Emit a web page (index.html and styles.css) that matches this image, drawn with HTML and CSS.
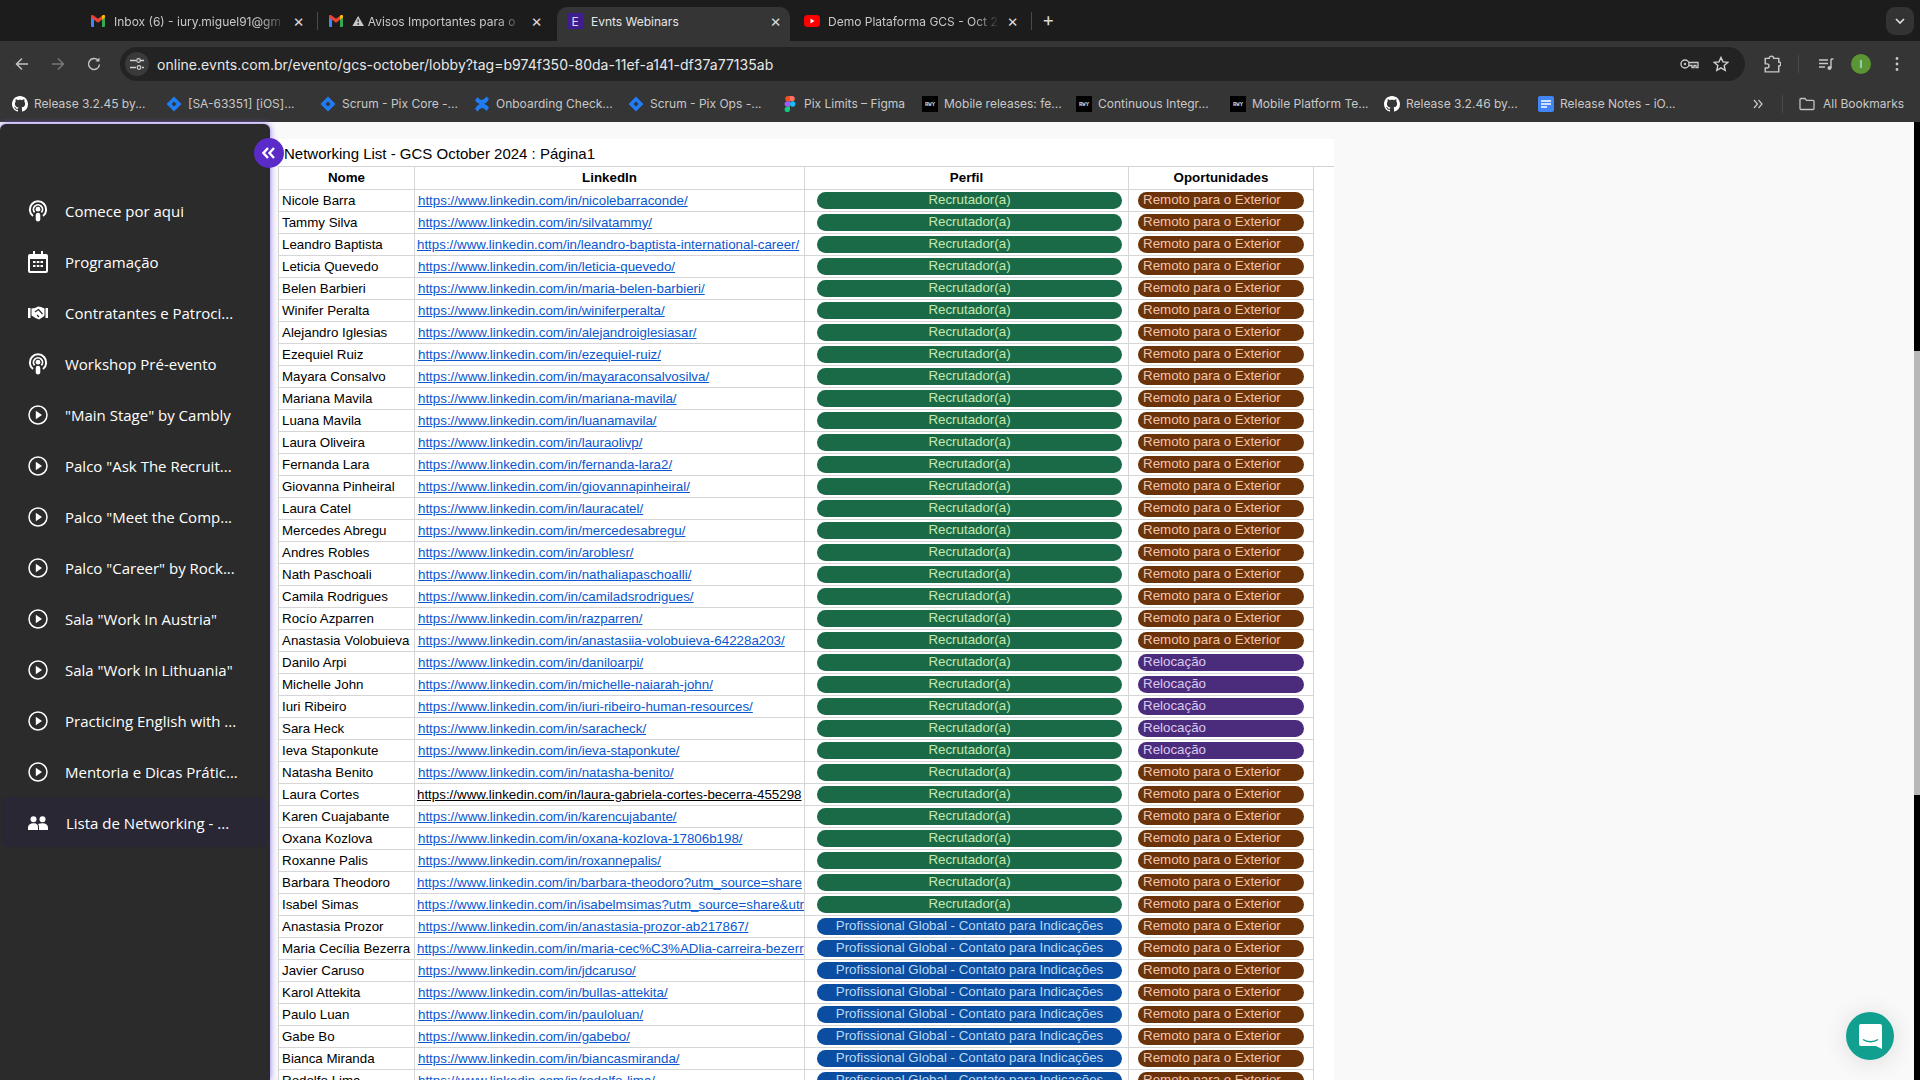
FILE: index.html
```html
<!DOCTYPE html>
<html lang="en">
	<head>
		<meta charset="utf-8" />
		<meta name="viewport" content="width=device-width, initial-scale=1.0" />
		<title>Evnts Webinars</title>
		<link rel="stylesheet" href="styles.css">
	</head>
	<body>
		<svg class="defs" width="0" height="0">
			<symbol id="gmail" viewBox="0 0 16 16">
				<path d="M1 14V4l3 2v8H2a1 1 0 0 1-1-1z" fill="#4285f4" />
				<path d="M15 14V4l-3 2v8h2a1 1 0 0 0 1-1z" fill="#34a853" />
				<path d="M1 4.500V3.200C1 2 2.300 1.500 3.200 2.200L8 5.800l4.800-3.600C13.700 1.500 15 2 15 3.200v1.300l-3 2.200-4 3-4-3z" fill="#ea4335" />
				<path d="M12 6.700l3-2.200V3.200C15 2 13.700 1.500 12.800 2.200L12 2.800z" fill="#fbbc04" />
			</symbol>
			<symbol id="github" viewBox="0 0 16 16">
				<path fill="#fff" d="M8 0C3.580 0 0 3.580 0 8c0 3.540 2.290 6.530 5.470 7.590.4.070.55-.17.55-.38 0-.19-.01-.82-.01-1.490-2.010.37-2.530-.49-2.690-.94-.09-.23-.48-.94-.82-1.130-.28-.15-.68-.52-.01-.53.63-.01 1.080.58 1.230.82.72 1.210 1.870.87 2.330.66.07-.52.28-.87.51-1.070-1.780-.2-3.640-.89-3.640-3.950 0-.87.31-1.590.82-2.150-.08-.2-.36-1.020.08-2.120 0 0 .67-.21 2.200.82.64-.18 1.320-.27 2-.27.68 0 1.360.09 2 .27 1.530-1.040 2.200-.82 2.200-.82.44 1.100.16 1.920.08 2.120.51.56.82 1.270.82 2.150 0 3.070-1.870 3.750-3.650 3.950.29.25.54.73.54 1.480 0 1.070-.01 1.930-.01 2.200 0 .21.15.46.55.38A8.013 8.013 0 0 0 16 8c0-4.420-3.580-8-8-8z" />
			</symbol>
			<symbol id="jira" viewBox="0 0 16 16">
				<path fill="#1f7cf5" d="M8 .5 15.500 8 8 15.500.5 8zM8 5.500 5.500 8 8 10.500 10.500 8z" fill-rule="evenodd" />
			</symbol>
			<symbol id="rwy" viewBox="0 0 16 16">
				<rect width="16" height="16" fill="#000" />
				<text x="8" y="10" text-anchor="middle" font-family="Liberation Mono, monospace" font-size="5.500" font-weight="700" fill="#ddd">RWY</text>
			</symbol>
			<symbol id="podcast" viewBox="0 0 22 24">
				<path d="M5.500 17.500a9 9 0 1 1 11 0" fill="none" stroke="#fff" stroke-width="2.200" />
				<path d="M7.300 13.600a5 5 0 1 1 7.400 0" fill="none" stroke="#fff" stroke-width="2" />
				<circle cx="11" cy="10" r="2.600" fill="#fff" />
				<rect x="8.500" y="14" width="5" height="9.500" rx="2.500" fill="#fff" />
			</symbol>
			<symbol id="play" viewBox="0 0 20 20">
				<circle cx="10" cy="10" r="9" fill="none" stroke="#fff" stroke-width="1.500" />
				<path d="M7.800 5.800 14 10l-6.200 4.200z" fill="#fff" />
			</symbol>
		</svg>

		<header class="tabstrip">
			<div class="tab tab-sep">
				<svg class="fav"><use href="#gmail" /></svg>
				<span class="tab-title">Inbox (6) - iury.miguel91@gm</span>
				<span class="tab-close">×</span>
			</div>
			<div class="tab">
				<svg class="fav"><use href="#gmail" /></svg>
				<span class="tab-title">⚠ Avisos Importantes para o</span>
				<span class="tab-close">×</span>
			</div>
			<div class="tab tab-active">
				<span class="fav fav-evnts">E</span>
				<span class="tab-title">Evnts Webinars</span>
				<span class="tab-close">×</span>
			</div>
			<div class="tab tab-sep">
				<svg class="fav" viewBox="0 0 16 16">
					<rect y="2" width="16" height="12" rx="3.500" fill="#f00" />
					<path d="M6.500 5.500 10.500 8l-4 2.500z" fill="#fff" />
				</svg>
				<span class="tab-title">Demo Plataforma GCS - Oct 2</span>
				<span class="tab-close">×</span>
			</div>
			<span class="tab-new">+</span>
			<span class="tab-list">
				<svg width="10" height="6" viewBox="0 0 10 6"><path d="M1 1l4 4 4-4" fill="none" stroke="#e4e4e4" stroke-width="1.600" /></svg>
			</span>
		</header>

		<nav class="toolbar">
			<svg class="tool tool-back" viewBox="0 0 16 16"><path d="M14 8H2.500M8 2.500 2.500 8 8 13.500" fill="none" stroke="#c4c4c4" stroke-width="1.500" /></svg>
			<svg class="tool tool-fwd" viewBox="0 0 16 16"><path d="M2 8h11.500M8 2.500 13.500 8 8 13.500" fill="none" stroke="#777" stroke-width="1.500" /></svg>
			<svg class="tool tool-reload" viewBox="0 0 16 16"><path d="M13.500 8.500A5.500 5.500 0 1 1 12 4.200" fill="none" stroke="#c4c4c4" stroke-width="1.500" /><path d="M13.500 1.500v4h-4z" fill="#c4c4c4" /></svg>
			<div class="omnibox">
				<span class="site-chip">
					<svg width="14" height="14" viewBox="0 0 14 14"><path d="M0 3.500h6M0 10.500h6M10 3.500h4M12 10.500h2" stroke="#d0d0d0" stroke-width="1.300" /><circle cx="8.500" cy="3.500" r="1.800" fill="none" stroke="#d0d0d0" stroke-width="1.200" /><circle cx="9" cy="10.500" r="1.800" fill="none" stroke="#d0d0d0" stroke-width="1.200" /></svg>
				</span>
				<span class="url">online.evnts.com.br/evento/gcs-october/lobby?tag=b974f350-80da-11ef-a141-df37a77135ab</span>
				<svg class="omni-key" width="19" height="12" viewBox="0 0 19 12"><circle cx="5" cy="6" r="4" fill="none" stroke="#c8c8c8" stroke-width="1.400" /><circle cx="5" cy="6" r="1.200" fill="#c8c8c8" /><path d="M9 4.500h9v5h-2V7.500h-2v2h-2V7.500H9" fill="none" stroke="#c8c8c8" stroke-width="1.300" /></svg>
				<svg class="omni-star" width="16" height="16" viewBox="0 0 16 16"><path d="M8 1.500l2 4.400 4.700.5-3.500 3.200 1 4.700L8 11.900l-4.200 2.400 1-4.700L1.300 6.400 6 5.900z" fill="none" stroke="#d0d0d0" stroke-width="1.400" /></svg>
			</div>
			<svg class="tool tool-ext" viewBox="0 0 16 16"><path d="M2 3h3.500a2 2 0 0 1 4 0H14v3.200a1.800 1.800 0 0 1 0 3.600V15H2v-3.500h1.500a1.800 1.800 0 0 0 0-3.600H2z" fill="none" stroke="#c8c8c8" stroke-width="1.300" /></svg>
			<span class="tool-sep"></span>
			<svg class="tool tool-media" viewBox="0 0 16 16"><path d="M1 4h9M1 7.500h9M1 11h6" stroke="#c8c8c8" stroke-width="1.400" /><path d="M13 3v9" stroke="#c8c8c8" stroke-width="1.400" /><path d="M13 3h2.500" stroke="#c8c8c8" stroke-width="1.400" /><circle cx="11.500" cy="12" r="2" fill="#c8c8c8" /></svg>
			<span class="avatar">I</span>
			<svg class="tool tool-menu" viewBox="0 0 4 16"><circle cx="2" cy="2.500" r="1.400" fill="#c8c8c8" /><circle cx="2" cy="8" r="1.400" fill="#c8c8c8" /><circle cx="2" cy="13.500" r="1.400" fill="#c8c8c8" /></svg>
		</nav>

		<div class="bookmarks">
			<span class="bm"><svg class="fav"><use href="#github" /></svg><span class="bm-text">Release 3.2.45 by...</span></span>
			<span class="bm"><svg class="fav"><use href="#jira" /></svg><span class="bm-text">[SA-63351] [iOS]...</span></span>
			<span class="bm"><svg class="fav"><use href="#jira" /></svg><span class="bm-text">Scrum - Pix Core -...</span></span>
			<span class="bm">
				<svg class="fav" viewBox="0 0 16 16"><path d="M1 13c4-7 9-7 14-1.500L12.500 15C9 11 7 11 3.500 15.500zM15 3C11 10 6 10 1 4.500L3.500 1C7 5 9 5 12.500.5z" fill="#1f7cf5" /></svg>
				<span class="bm-text">Onboarding Check...</span>
			</span>
			<span class="bm"><svg class="fav"><use href="#jira" /></svg><span class="bm-text">Scrum - Pix Ops -...</span></span>
			<span class="bm bm-figma">
				<svg class="fav" viewBox="0 0 16 16">
					<path d="M8 0H5.300a2.700 2.700 0 0 0 0 5.300H8z" fill="#f24e1e" />
					<path d="M8 0h2.700a2.700 2.700 0 0 1 0 5.300H8z" fill="#ff7262" />
					<path d="M8 5.300H5.300a2.700 2.700 0 0 0 0 5.400H8z" fill="#a259ff" />
					<circle cx="10.700" cy="8" r="2.700" fill="#1abcfe" />
					<path d="M5.300 10.700H8v2.600a2.700 2.700 0 1 1-2.700-2.600z" fill="#0acf83" />
				</svg>
				<span class="bm-text">Pix Limits – Figma</span>
			</span>
			<span class="bm"><svg class="fav"><use href="#rwy" /></svg><span class="bm-text">Mobile releases: fe...</span></span>
			<span class="bm"><svg class="fav"><use href="#rwy" /></svg><span class="bm-text">Continuous Integr...</span></span>
			<span class="bm"><svg class="fav"><use href="#rwy" /></svg><span class="bm-text">Mobile Platform Te...</span></span>
			<span class="bm"><svg class="fav"><use href="#github" /></svg><span class="bm-text">Release 3.2.46 by...</span></span>
			<span class="bm bm-docs">
				<svg class="fav" viewBox="0 0 16 16"><rect width="16" height="16" rx="2" fill="#4285f4" /><path d="M3 5h10M3 8h10M3 11h6" stroke="#fff" stroke-width="1.500" /></svg>
				<span class="bm-text">Release Notes - iO...</span>
			</span>
			<svg class="bm-more" width="10" height="10" viewBox="0 0 10 10"><path d="M1 1l3.500 4L1 9M5.500 1 9 5 5.500 9" fill="none" stroke="#c8c8c8" stroke-width="1.200" /></svg>
			<span class="bm-sep"></span>
			<svg class="bm-folder" width="16" height="14" viewBox="0 0 16 14"><path d="M1 2.500a1 1 0 0 1 1-1h4l1.500 1.800H14a1 1 0 0 1 1 1v7.200a1 1 0 0 1-1 1H2a1 1 0 0 1-1-1z" fill="none" stroke="#c4c4c4" stroke-width="1.300" /></svg>
			<span class="bm-all">All Bookmarks</span>
		</div>

		<main class="page">
			<aside class="sidebar">
				<button class="collapse">
					<svg width="14" height="12" viewBox="0 0 14 12"><path d="M6 1 1.500 6 6 11M12 1 7.500 6 12 11" fill="none" stroke="#fff" stroke-width="2.400" /></svg>
				</button>
				<ul class="menu">
					<li class="menu-item"><svg class="menu-icon"><use href="#podcast" /></svg>Comece por aqui</li>
					<li class="menu-item">
						<svg class="menu-icon" viewBox="0 0 20 22"><path d="M5 0h2v3h6V0h2v3h3a2 2 0 0 1 2 2v15a2 2 0 0 1-2 2H2a2 2 0 0 1-2-2V5a2 2 0 0 1 2-2h3z" fill="#fff" /><rect x="2" y="8" width="16" height="12" fill="#2b2b2b" /><path d="M5 10h2.500v2H5zM8.800 10h2.500v2H8.800zM12.500 10H15v2h-2.500zM5 14h2.500v2H5zM8.800 14h2.500v2H8.800zM12.500 14H15v2h-2.500z" fill="#fff" /></svg>
						Programação
					</li>
					<li class="menu-item">
						<svg class="menu-icon" viewBox="0 0 20 14"><path d="M0 2h2.500v10H0zM17.500 2H20v10h-2.500z" fill="#fff" /><path d="M3.500 2.500 7 2l3-1.500 3 .5 3.500 1.500v7L15 11l-4 2.500-3.500-1.500-4-2.500z" fill="#fff" /><path d="M7 6l3.500-2.500 4 4.500M9 9l2 2" fill="none" stroke="#2b2b2b" stroke-width="1.200" /></svg>
						Contratantes e Patroci...
					</li>
					<li class="menu-item"><svg class="menu-icon"><use href="#podcast" /></svg>Workshop Pré-evento</li>
					<li class="menu-item"><svg class="menu-icon"><use href="#play" /></svg>"Main Stage" by Cambly</li>
					<li class="menu-item"><svg class="menu-icon"><use href="#play" /></svg>Palco "Ask The Recruit...</li>
					<li class="menu-item"><svg class="menu-icon"><use href="#play" /></svg>Palco "Meet the Comp...</li>
					<li class="menu-item"><svg class="menu-icon"><use href="#play" /></svg>Palco "Career" by Rock...</li>
					<li class="menu-item"><svg class="menu-icon"><use href="#play" /></svg>Sala "Work In Austria"</li>
					<li class="menu-item"><svg class="menu-icon"><use href="#play" /></svg>Sala "Work In Lithuania"</li>
					<li class="menu-item"><svg class="menu-icon"><use href="#play" /></svg>Practicing English with ...</li>
					<li class="menu-item"><svg class="menu-icon"><use href="#play" /></svg>Mentoria e Dicas Prátic...</li>
					<li class="menu-item menu-active">
						<svg class="menu-icon" viewBox="0 0 20 14"><circle cx="5.500" cy="3.200" r="3" fill="#fff" /><circle cx="14.500" cy="3.200" r="3" fill="#fff" /><path d="M0 14v-2.500C0 9 2 7.200 5.500 7.200S10 9 10 11.500V14z" fill="#fff" /><path d="M11 14v-3c0-1.300-.4-2.300-1-3 1.200-.6 2.800-.8 4.500-.8 3.500 0 5.500 1.800 5.500 4.300V14z" fill="#fff" /></svg>
						Lista de Networking - ...
					</li>
				</ul>
			</aside>

			<section class="content">
				<div class="sheet">
					<div class="sheet-title">Networking List - GCS October 2024 : Página1</div>
					<table class="grid">
						<colgroup>
							<col class="col-name" />
							<col class="col-link" />
							<col class="col-perfil" />
							<col class="col-opp" />
						</colgroup>
						<thead>
							<tr><th>Nome</th><th>LinkedIn</th><th>Perfil</th><th>Oportunidades</th></tr>
						</thead>
						<tbody>
							<tr><td>Nicole Barra</td><td><a href="#">https://www.linkedin.com/in/nicolebarraconde/</a></td><td class="perfil"><span class="pill green">Recrutador(a)</span></td><td class="opp"><span class="pill brown">Remoto para o Exterior</span></td></tr>
							<tr><td>Tammy Silva</td><td><a href="#">https://www.linkedin.com/in/silvatammy/</a></td><td class="perfil"><span class="pill green">Recrutador(a)</span></td><td class="opp"><span class="pill brown">Remoto para o Exterior</span></td></tr>
							<tr><td>Leandro Baptista</td><td class="long"><a href="#">https://www.linkedin.com/in/leandro-baptista-international-career/</a></td><td class="perfil"><span class="pill green">Recrutador(a)</span></td><td class="opp"><span class="pill brown">Remoto para o Exterior</span></td></tr>
							<tr><td>Leticia Quevedo</td><td><a href="#">https://www.linkedin.com/in/leticia-quevedo/</a></td><td class="perfil"><span class="pill green">Recrutador(a)</span></td><td class="opp"><span class="pill brown">Remoto para o Exterior</span></td></tr>
							<tr><td>Belen Barbieri</td><td><a href="#">https://www.linkedin.com/in/maria-belen-barbieri/</a></td><td class="perfil"><span class="pill green">Recrutador(a)</span></td><td class="opp"><span class="pill brown">Remoto para o Exterior</span></td></tr>
							<tr><td>Winifer Peralta</td><td><a href="#">https://www.linkedin.com/in/winiferperalta/</a></td><td class="perfil"><span class="pill green">Recrutador(a)</span></td><td class="opp"><span class="pill brown">Remoto para o Exterior</span></td></tr>
							<tr><td>Alejandro Iglesias</td><td><a href="#">https://www.linkedin.com/in/alejandroiglesiasar/</a></td><td class="perfil"><span class="pill green">Recrutador(a)</span></td><td class="opp"><span class="pill brown">Remoto para o Exterior</span></td></tr>
							<tr><td>Ezequiel Ruiz</td><td><a href="#">https://www.linkedin.com/in/ezequiel-ruiz/</a></td><td class="perfil"><span class="pill green">Recrutador(a)</span></td><td class="opp"><span class="pill brown">Remoto para o Exterior</span></td></tr>
							<tr><td>Mayara Consalvo</td><td><a href="#">https://www.linkedin.com/in/mayaraconsalvosilva/</a></td><td class="perfil"><span class="pill green">Recrutador(a)</span></td><td class="opp"><span class="pill brown">Remoto para o Exterior</span></td></tr>
							<tr><td>Mariana Mavila</td><td><a href="#">https://www.linkedin.com/in/mariana-mavila/</a></td><td class="perfil"><span class="pill green">Recrutador(a)</span></td><td class="opp"><span class="pill brown">Remoto para o Exterior</span></td></tr>
							<tr><td>Luana Mavila</td><td><a href="#">https://www.linkedin.com/in/luanamavila/</a></td><td class="perfil"><span class="pill green">Recrutador(a)</span></td><td class="opp"><span class="pill brown">Remoto para o Exterior</span></td></tr>
							<tr><td>Laura Oliveira</td><td><a href="#">https://www.linkedin.com/in/lauraolivp/</a></td><td class="perfil"><span class="pill green">Recrutador(a)</span></td><td class="opp"><span class="pill brown">Remoto para o Exterior</span></td></tr>
							<tr><td>Fernanda Lara</td><td><a href="#">https://www.linkedin.com/in/fernanda-lara2/</a></td><td class="perfil"><span class="pill green">Recrutador(a)</span></td><td class="opp"><span class="pill brown">Remoto para o Exterior</span></td></tr>
							<tr><td>Giovanna Pinheiral</td><td><a href="#">https://www.linkedin.com/in/giovannapinheiral/</a></td><td class="perfil"><span class="pill green">Recrutador(a)</span></td><td class="opp"><span class="pill brown">Remoto para o Exterior</span></td></tr>
							<tr><td>Laura Catel</td><td><a href="#">https://www.linkedin.com/in/lauracatel/</a></td><td class="perfil"><span class="pill green">Recrutador(a)</span></td><td class="opp"><span class="pill brown">Remoto para o Exterior</span></td></tr>
							<tr><td>Mercedes Abregu</td><td><a href="#">https://www.linkedin.com/in/mercedesabregu/</a></td><td class="perfil"><span class="pill green">Recrutador(a)</span></td><td class="opp"><span class="pill brown">Remoto para o Exterior</span></td></tr>
							<tr><td>Andres Robles</td><td><a href="#">https://www.linkedin.com/in/aroblesr/</a></td><td class="perfil"><span class="pill green">Recrutador(a)</span></td><td class="opp"><span class="pill brown">Remoto para o Exterior</span></td></tr>
							<tr><td>Nath Paschoali</td><td><a href="#">https://www.linkedin.com/in/nathaliapaschoalli/</a></td><td class="perfil"><span class="pill green">Recrutador(a)</span></td><td class="opp"><span class="pill brown">Remoto para o Exterior</span></td></tr>
							<tr><td>Camila Rodrigues</td><td><a href="#">https://www.linkedin.com/in/camiladsrodrigues/</a></td><td class="perfil"><span class="pill green">Recrutador(a)</span></td><td class="opp"><span class="pill brown">Remoto para o Exterior</span></td></tr>
							<tr><td>Rocío Azparren</td><td><a href="#">https://www.linkedin.com/in/razparren/</a></td><td class="perfil"><span class="pill green">Recrutador(a)</span></td><td class="opp"><span class="pill brown">Remoto para o Exterior</span></td></tr>
							<tr><td>Anastasia Volobuieva</td><td><a href="#">https://www.linkedin.com/in/anastasiia-volobuieva-64228a203/</a></td><td class="perfil"><span class="pill green">Recrutador(a)</span></td><td class="opp"><span class="pill brown">Remoto para o Exterior</span></td></tr>
							<tr><td>Danilo Arpi</td><td><a href="#">https://www.linkedin.com/in/daniloarpi/</a></td><td class="perfil"><span class="pill green">Recrutador(a)</span></td><td class="opp"><span class="pill purple">Relocação</span></td></tr>
							<tr><td>Michelle John</td><td><a href="#">https://www.linkedin.com/in/michelle-naiarah-john/</a></td><td class="perfil"><span class="pill green">Recrutador(a)</span></td><td class="opp"><span class="pill purple">Relocação</span></td></tr>
							<tr><td>Iuri Ribeiro</td><td><a href="#">https://www.linkedin.com/in/iuri-ribeiro-human-resources/</a></td><td class="perfil"><span class="pill green">Recrutador(a)</span></td><td class="opp"><span class="pill purple">Relocação</span></td></tr>
							<tr><td>Sara Heck</td><td><a href="#">https://www.linkedin.com/in/saracheck/</a></td><td class="perfil"><span class="pill green">Recrutador(a)</span></td><td class="opp"><span class="pill purple">Relocação</span></td></tr>
							<tr><td>Ieva Staponkute</td><td><a href="#">https://www.linkedin.com/in/ieva-staponkute/</a></td><td class="perfil"><span class="pill green">Recrutador(a)</span></td><td class="opp"><span class="pill purple">Relocação</span></td></tr>
							<tr><td>Natasha Benito</td><td><a href="#">https://www.linkedin.com/in/natasha-benito/</a></td><td class="perfil"><span class="pill green">Recrutador(a)</span></td><td class="opp"><span class="pill brown">Remoto para o Exterior</span></td></tr>
							<tr><td>Laura Cortes</td><td class="long"><a class="plain" href="#">https://www.linkedin.com/in/laura-gabriela-cortes-becerra-455298</a></td><td class="perfil"><span class="pill green">Recrutador(a)</span></td><td class="opp"><span class="pill brown">Remoto para o Exterior</span></td></tr>
							<tr><td>Karen Cuajabante</td><td><a href="#">https://www.linkedin.com/in/karencujabante/</a></td><td class="perfil"><span class="pill green">Recrutador(a)</span></td><td class="opp"><span class="pill brown">Remoto para o Exterior</span></td></tr>
							<tr><td>Oxana Kozlova</td><td><a href="#">https://www.linkedin.com/in/oxana-kozlova-17806b198/</a></td><td class="perfil"><span class="pill green">Recrutador(a)</span></td><td class="opp"><span class="pill brown">Remoto para o Exterior</span></td></tr>
							<tr><td>Roxanne Palis</td><td><a href="#">https://www.linkedin.com/in/roxannepalis/</a></td><td class="perfil"><span class="pill green">Recrutador(a)</span></td><td class="opp"><span class="pill brown">Remoto para o Exterior</span></td></tr>
							<tr><td>Barbara Theodoro</td><td class="long"><a href="#">https://www.linkedin.com/in/barbara-theodoro?utm_source=share</a></td><td class="perfil"><span class="pill green">Recrutador(a)</span></td><td class="opp"><span class="pill brown">Remoto para o Exterior</span></td></tr>
							<tr><td>Isabel Simas</td><td class="long"><a href="#">https://www.linkedin.com/in/isabelmsimas?utm_source=share&amp;utr</a></td><td class="perfil"><span class="pill green">Recrutador(a)</span></td><td class="opp"><span class="pill brown">Remoto para o Exterior</span></td></tr>
							<tr><td>Anastasia Prozor</td><td><a href="#">https://www.linkedin.com/in/anastasia-prozor-ab217867/</a></td><td class="perfil"><span class="pill blue">Profissional Global - Contato para Indicações</span></td><td class="opp"><span class="pill brown">Remoto para o Exterior</span></td></tr>
							<tr><td>Maria Cecília Bezerra</td><td class="long"><a href="#">https://www.linkedin.com/in/maria-cec%C3%ADlia-carreira-bezerr</a></td><td class="perfil"><span class="pill blue">Profissional Global - Contato para Indicações</span></td><td class="opp"><span class="pill brown">Remoto para o Exterior</span></td></tr>
							<tr><td>Javier Caruso</td><td><a href="#">https://www.linkedin.com/in/jdcaruso/</a></td><td class="perfil"><span class="pill blue">Profissional Global - Contato para Indicações</span></td><td class="opp"><span class="pill brown">Remoto para o Exterior</span></td></tr>
							<tr><td>Karol Attekita</td><td><a href="#">https://www.linkedin.com/in/bullas-attekita/</a></td><td class="perfil"><span class="pill blue">Profissional Global - Contato para Indicações</span></td><td class="opp"><span class="pill brown">Remoto para o Exterior</span></td></tr>
							<tr><td>Paulo Luan</td><td><a href="#">https://www.linkedin.com/in/pauloluan/</a></td><td class="perfil"><span class="pill blue">Profissional Global - Contato para Indicações</span></td><td class="opp"><span class="pill brown">Remoto para o Exterior</span></td></tr>
							<tr><td>Gabe Bo</td><td><a href="#">https://www.linkedin.com/in/gabebo/</a></td><td class="perfil"><span class="pill blue">Profissional Global - Contato para Indicações</span></td><td class="opp"><span class="pill brown">Remoto para o Exterior</span></td></tr>
							<tr><td>Bianca Miranda</td><td><a href="#">https://www.linkedin.com/in/biancasmiranda/</a></td><td class="perfil"><span class="pill blue">Profissional Global - Contato para Indicações</span></td><td class="opp"><span class="pill brown">Remoto para o Exterior</span></td></tr>
							<tr><td>Rodolfo Lima</td><td><a href="#">https://www.linkedin.com/in/rodolfo-lima/</a></td><td class="perfil"><span class="pill blue">Profissional Global - Contato para Indicações</span></td><td class="opp"><span class="pill brown">Remoto para o Exterior</span></td></tr>
						</tbody>
					</table>
				</div>
			</section>

			<div class="scrollbar"><div class="scroll-thumb"></div></div>

			<button class="chat">
				<svg width="23" height="25" viewBox="0 0 23 25"><path d="M2 0h19a2 2 0 0 1 2 2v23l-6-3H2a2 2 0 0 1-2-2V2a2 2 0 0 1 2-2z" fill="#fff" /><path d="M4 15.500c4 3 11 3 15 0" fill="none" stroke="#11a08f" stroke-width="1.500" /></svg>
			</button>
		</main>
	</body>
</html>
```

FILE: styles.css
```css
* {
	box-sizing: border-box;
}

body {
	margin: 0;
	height: 1080px;
	display: flex;
	flex-direction: column;
	overflow: hidden;
	background: #353535;
	font-family: 'Liberation Sans', Arial, sans-serif;
}

.defs {
	position: absolute;
}

.fav {
	flex: none;
	width: 16px;
	height: 16px;
}

/* tabs */
.tabstrip {
	flex: none;
	display: flex;
	align-items: flex-end;
	height: 41px;
	padding-left: 80px;
	background: #1c1c1c;
	color: #c8c8c8;
	font-family: Inter, sans-serif;
	font-size: 12px;
}

.tab {
	position: relative;
	flex: none;
	display: flex;
	align-items: center;
	width: 238px;
	height: 34px;
	padding: 0 0 6px 10px;
}

.tab-sep::after {
	content: '';
	position: absolute;
	top: 5px;
	right: 0;
	width: 1px;
	height: 18px;
	background: #4a4a4a;
}

.tab-active {
	margin-left: 1px;
	margin-right: 4px;
	width: 233px;
	border-radius: 10px 10px 0 0;
	background: #353535;
	color: #e6e6e6;
}

.tab-title {
	width: 172px;
	margin-left: 8px;
	white-space: nowrap;
	overflow: hidden;
	-webkit-mask-image: linear-gradient(90deg, #000 85%, transparent);
	mask-image: linear-gradient(90deg, #000 85%, transparent);
}

.tab-active .tab-title {
	-webkit-mask-image: none;
	mask-image: none;
}

.tab-close {
	margin-left: 7px;
	color: #d8d8d8;
	font-size: 17px;
	line-height: 1;
}

.fav-evnts {
	display: flex;
	align-items: center;
	justify-content: center;
	background: #3f1d8f;
	color: #e0d8f5;
	font-size: 12px;
}

.tab-new {
	align-self: flex-start;
	margin: 7px 0 0 10px;
	color: #d8d8d8;
	font-size: 19px;
	line-height: 26px;
}

.tab-list {
	display: flex;
	align-items: center;
	justify-content: center;
	align-self: flex-start;
	width: 28px;
	height: 28px;
	margin: 7px 6px 0 auto;
	border-radius: 9px;
	background: #333;
}

/* toolbar */
.toolbar {
	flex: none;
	display: flex;
	align-items: center;
	height: 40px;
	padding: 6px 0 0 14px;
	border-radius: 8px 8px 0 0;
	background: #353535;
}

.tool {
	flex: none;
	width: 16px;
	height: 16px;
}

.tool-fwd {
	margin-left: 20px;
}

.tool-reload {
	margin-left: 20px;
}

.omnibox {
	flex: none;
	display: flex;
	align-items: center;
	width: 1625px;
	height: 34px;
	margin-left: 18px;
	padding-left: 5px;
	border-radius: 17px;
	background: #232323;
	color: #e8e8e8;
}

.site-chip {
	flex: none;
	display: flex;
	align-items: center;
	justify-content: center;
	width: 24px;
	height: 24px;
	border-radius: 50%;
	background: #3a3a3a;
}

.url {
	margin-left: 8px;
	width: 1523px;
	font-family: Inter, sans-serif;
	font-size: 14px;
	letter-spacing: 0.03px;
}

.omni-key {
	flex: none;
}

.omni-star {
	flex: none;
	margin-left: 14px;
}

.tool-ext {
	width: 18px;
	height: 18px;
	margin-left: 18px;
}

.tool-sep {
	flex: none;
	width: 1px;
	height: 18px;
	margin-left: 17px;
	background: #4a4a4a;
}

.tool-media {
	margin-left: 19px;
}

.avatar {
	flex: none;
	display: flex;
	align-items: center;
	justify-content: center;
	width: 20px;
	height: 20px;
	margin-left: 17px;
	border-radius: 50%;
	background: #5c9632;
	color: #e8f2de;
	font-size: 10px;
}

.tool-menu {
	width: 4px;
	margin-left: 24px;
}

/* bookmarks */
.bookmarks {
	flex: none;
	display: flex;
	align-items: center;
	height: 41px;
	padding: 4px 0 0 12px;
	color: #c8c8c8;
	font-family: Inter, sans-serif;
	font-size: 12px;
}

.bm {
	flex: none;
	display: flex;
	align-items: center;
	width: 154px;
	white-space: nowrap;
}

.bm-figma {
	width: 140px;
}

.bm-docs {
	width: 130px;
}

.bm-text {
	margin-left: 6px;
}

.bm-more {
	flex: none;
	margin-left: 85px;
}

.bm-sep {
	flex: none;
	width: 1px;
	height: 18px;
	margin-left: 19px;
	background: #4a4a4a;
}

.bm-folder {
	flex: none;
	margin-left: 16px;
}

.bm-all {
	margin-left: 8px;
	white-space: nowrap;
}

/* page below the browser chrome */
.page {
	position: relative;
	flex: 1;
	display: flex;
	min-height: 0;
	background: #f9f9f9;
}

.sidebar {
	position: relative;
	z-index: 2;
	flex: none;
	width: 270px;
	margin-top: 2px;
	padding-top: 61px;
	border-radius: 6px 6px 0 0;
	background: #2b2b2b;
	box-shadow: 0 0 6px #8a6cf0;
	color: #fff;
	font-family: 'Open Sans', sans-serif;
	font-size: 15px;
}

.collapse {
	position: absolute;
	top: 14px;
	right: -14px;
	display: flex;
	align-items: center;
	justify-content: center;
	width: 30px;
	height: 30px;
	padding: 0;
	border: none;
	border-radius: 50%;
	background: #5b2bc9;
}

.menu {
	margin: 0;
	padding: 0;
	list-style: none;
}

.menu-item {
	display: flex;
	align-items: center;
	gap: 17px;
	height: 51px;
	padding-left: 28px;
	white-space: nowrap;
}

.menu-icon {
	flex: none;
	width: 20px;
	height: 22px;
}

.menu-active {
	gap: 18px;
	height: 50px;
	margin: 0 2px 0 1px;
	padding-top: 2px;
	padding-left: 27px;
	border-radius: 6px;
	background: #2a2735;
}

.content {
	flex: 1;
	padding: 17px 0 0 8px;
}

.sheet {
	width: 1056px;
	background: #fff;
}

.sheet-title {
	height: 28px;
	padding-left: 6px;
	border-bottom: 1px solid #d4d4d4;
	color: #000;
	font-size: 15px;
	line-height: 29px;
}

.grid {
	table-layout: fixed;
	width: 1035px;
	border-collapse: collapse;
	color: #000;
	font-size: 13.33px;
}

.col-name {
	width: 136px;
}

.col-link {
	width: 390px;
}

.col-perfil {
	width: 324px;
}

.col-opp {
	width: 185px;
}

.grid th,
.grid td {
	height: 22px;
	padding: 0 3px;
	border: 1px solid #d6d6d6;
	white-space: nowrap;
	overflow: hidden;
}

.grid th {
	border-top: none;
}

.grid td.long {
	padding-left: 2px;
	padding-right: 0;
}

.grid a {
	color: #0a57d0;
}

.grid a.plain {
	color: #000;
}

.grid td.perfil {
	padding: 0 6px 0 12px;
}

.grid td.opp {
	padding: 0 9px 0 9px;
}

.pill {
	display: block;
	height: 17px;
	border-radius: 9px;
	line-height: 16px;
	overflow: hidden;
}

.perfil .pill {
	text-align: center;
}

.opp .pill {
	padding-left: 5px;
}

.green {
	background: #1a6a47;
	color: #c6e8ae;
}

.blue {
	background: #0b4da0;
	color: #b9daf5;
}

.brown {
	background: #6a3309;
	color: #f5c4ab;
}

.purple {
	background: #4b2c7c;
	color: #dcc8ee;
}

/* fake page scrollbar */
.scrollbar {
	flex: none;
	width: 6px;
	background: #000;
}

.scroll-thumb {
	height: 444px;
	margin-top: 229px;
	background: #b8b8b8;
}

.chat {
	position: absolute;
	right: 26px;
	bottom: 20px;
	display: flex;
	align-items: center;
	justify-content: center;
	width: 48px;
	height: 48px;
	padding: 0;
	border: none;
	border-radius: 50%;
	background: #11a08f;
	box-shadow: 0 2px 24px rgba(0, 0, 0, 0.12);
}
```
